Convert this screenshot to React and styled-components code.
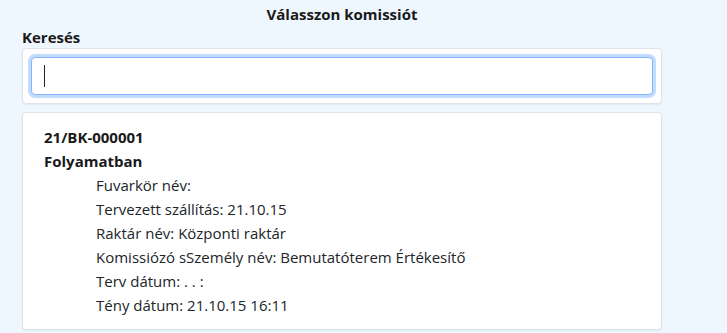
import React from "react";
import styled, { createGlobalStyle } from "styled-components";

const Global = createGlobalStyle`
  html, body { margin: 0; padding: 0; background: #eef6fe; }
  body { font-family: "Open Sans", "Noto Sans", sans-serif; color: #212529; }
  * { box-sizing: border-box; }
`;

const Page = styled.div`
  width: 640px;
  margin-left: 22px;
  padding-top: 2px;
`;

const Title = styled.div`
  text-align: center;
  font-weight: 700;
  font-size: 15px;
  line-height: 24px;
  color: #1a1a1a;
`;

const Label = styled.div`
  font-weight: 700;
  font-size: 15px;
  line-height: 22px;
  color: #1a1a1a;
`;

const Card = styled.div`
  background: #fff;
  border: 1px solid #dfe3e8;
  border-radius: 4px;
  box-shadow: 0 1px 2px rgba(0, 0, 0, 0.06);
  padding: ${(p) => p.$pad};
  margin-bottom: 8px;
`;

const InputWrap = styled.div`
  position: relative;
  &::after {
    content: "";
    position: absolute;
    left: 13px;
    top: 8px;
    width: 1px;
    height: 22px;
    background: #212529;
    pointer-events: none;
  }
`;

const SearchInput = styled.input`
  display: block;
  width: 100%;
  height: 38px;
  padding: 6px 12px;
  border: 1px solid #86b7fe;
  border-radius: 4px;
  font-family: inherit;
  font-size: 15px;
  color: #212529;
  outline: none;
  box-shadow: 0 0 0 3px #c2dcfe;
  caret-color: transparent;
`;

const Heading = styled.div`
  font-weight: 700;
  font-size: 15px;
  line-height: 24px;
  color: #1a1a1a;
`;

const Detail = styled.div`
  padding-left: 52px;
  font-size: 15px;
  line-height: 24px;
  color: #212529;
`;

const details = [
  "Fuvarkör név:",
  "Tervezett szállítás: 21.10.15",
  "Raktár név: Központi raktár",
  "Komissiózó sSzemély név: Bemutatóterem Értékesítő",
  "Terv dátum: . . :",
  "Tény dátum: 21.10.15 16:11",
];

export default function App() {
  return (
    <>
      <Global />
      <Page>
        <Title>Válasszon komissiót</Title>
        <Label>Keresés</Label>
        <Card $pad="8px">
          <InputWrap>
            <SearchInput />
          </InputWrap>
        </Card>
        <Card $pad="12px 21px">
          <Heading>21/BK-000001</Heading>
          <Heading>Folyamatban</Heading>
          {details.map((d) => (
            <Detail key={d}>{d}</Detail>
          ))}
        </Card>
      </Page>
    </>
  );
}
